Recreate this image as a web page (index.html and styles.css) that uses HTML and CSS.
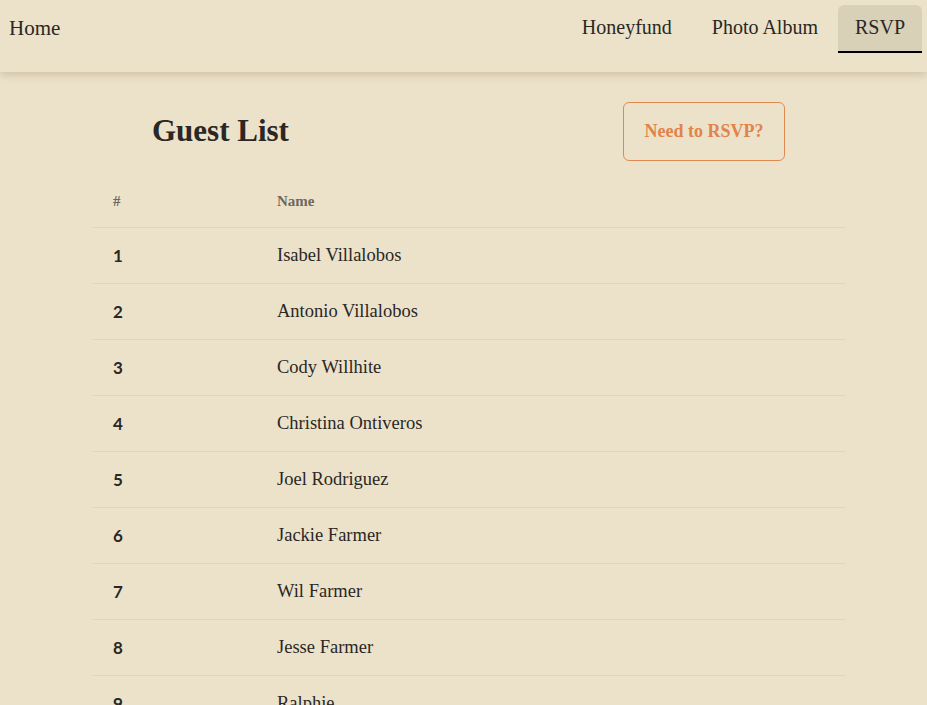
FILE: index.html
```html
<!DOCTYPE html>
<html>
<head>
<meta charset="utf-8">
<link rel="stylesheet" href="styles.css">
</head>
<body>
<nav class="navbar">
  <a class="brand" href="#">Home</a>
  <ul class="nav-links">
    <li><a href="#">Honeyfund</a></li>
    <li><a href="#">Photo Album</a></li>
    <li><a class="active" href="#">RSVP</a></li>
  </ul>
</nav>
<main class="content">
  <div class="title-row">
    <h1 class="title">Guest List</h1>
    <a class="rsvp-btn" href="#">Need to RSVP?</a>
  </div>
  <table class="guests">
    <thead>
      <tr><th class="col-num">#</th><th>Name</th></tr>
    </thead>
    <tbody>
      <tr><td class="num">1</td><td>Isabel Villalobos</td></tr>
      <tr><td class="num">2</td><td>Antonio Villalobos</td></tr>
      <tr><td class="num">3</td><td>Cody Willhite</td></tr>
      <tr><td class="num">4</td><td>Christina Ontiveros</td></tr>
      <tr><td class="num">5</td><td>Joel Rodriguez</td></tr>
      <tr><td class="num">6</td><td>Jackie Farmer</td></tr>
      <tr><td class="num">7</td><td>Wil Farmer</td></tr>
      <tr><td class="num">8</td><td>Jesse Farmer</td></tr>
      <tr><td class="num">9</td><td>Ralphie</td></tr>
    </tbody>
  </table>
</main>
</body>
</html>
```
FILE: styles.css
```css
html, body {
  margin: 0;
  padding: 0;
  background: #ece2ca;
  font-family: "Liberation Serif", "Times New Roman", serif;
  color: #2a2724;
}
a { text-decoration: none; color: inherit; }

.navbar {
  height: 72px;
  display: flex;
  align-items: flex-start;
  justify-content: space-between;
  background: #ece2ca;
  box-shadow: 0 3px 8px rgba(120, 100, 60, 0.25);
  position: relative;
  z-index: 2;
}
.brand {
  font-size: 21px;
  margin-left: 9px;
  margin-top: 16px;
  color: #2a2724;
}
.nav-links {
  list-style: none;
  margin: 5px 5px 0 0;
  padding: 0;
  display: flex;
}
.nav-links a {
  display: block;
  font-size: 20px;
  padding: 11px 20px 0;
  height: 35px;
  border-radius: 6px 6px 0 0;
  color: #2a2724;
}
.nav-links a.active {
  background: #d9d0b8;
  border-bottom: 2px solid #000;
  padding: 11px 17px 0;
}

.content {
  width: 753px;
  margin: 0 0 0 92px;
}
.title-row {
  display: flex;
  align-items: center;
  justify-content: space-between;
  padding: 29px 60px 0 60px;
  height: 60px;
}
.title {
  font-size: 31px;
  font-weight: bold;
  margin: 0;
  color: #2a2724;
}
.rsvp-btn {
  display: flex;
  align-items: center;
  justify-content: center;
  width: 160px;
  height: 57px;
  border: 1px solid #e08a52;
  border-radius: 6px;
  color: #e0844b;
  font-weight: bold;
  font-size: 18px;
}

.guests {
  width: 100%;
  border-collapse: collapse;
  margin-top: 25px;
}
.guests th {
  text-align: left;
  font-size: 15px;
  font-weight: bold;
  color: #6e6860;
  height: 41px;
  vertical-align: top;
  padding: 7px 0 0 0;
  border-bottom: 1px solid #e0d6bc;
  box-sizing: border-box;
}
.guests th.col-num { width: 185px; padding-left: 21px; }
.guests td {
  height: 56px;
  font-size: 18.5px;
  padding: 0;
  border-bottom: 1px solid #e0d6bc;
  box-sizing: border-box;
}
.guests td.num {
  padding-left: 21px;
  font-family: Lato, "Liberation Sans", sans-serif;
  font-weight: bold;
  font-size: 17px;
}
```
